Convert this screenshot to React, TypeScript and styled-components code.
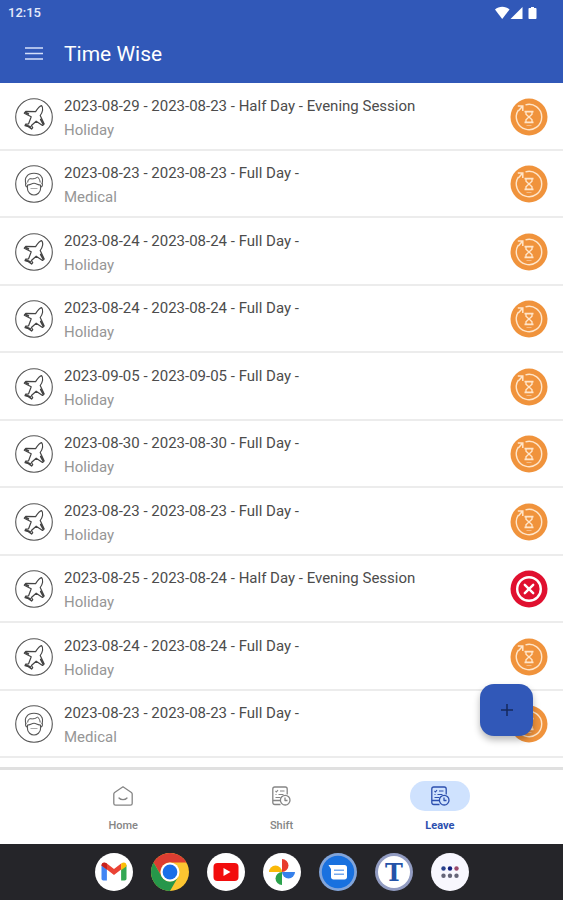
import React from "react";
import styled, { createGlobalStyle } from "styled-components";

const GlobalStyle = createGlobalStyle`
  * { box-sizing: border-box; }
  body { margin: 0; background: #fff; font-family: Roboto, "Liberation Sans", sans-serif; }
  button { font: inherit; color: inherit; border: 0; padding: 0; background: none; cursor: pointer; }
  ul { list-style: none; margin: 0; padding: 0; }
  svg { display: block; flex: none; }
`;

const Page = styled.div`
  min-height: 100vh;
  display: flex;
  flex-direction: column;
`;

const Header = styled.header`
  background: #3158b8;
  color: #fff;
`;

const StatusBar = styled.div`
  height: 25px;
  padding: 0 24px 0 8px;
  display: flex;
  align-items: center;
  justify-content: space-between;
  font-size: 13px;
  font-weight: 500;
  color: #e4eafa;
`;

const AppBar = styled.div`
  height: 58px;
  padding: 0 24px;
  display: flex;
  align-items: center;
  gap: 20px;
`;

const Title = styled.h1`
  margin: 0;
  font-size: 21px;
  line-height: 24px;
  font-weight: 400;
`;

const Main = styled.main`
  position: relative;
  flex: 1;
  display: flex;
  flex-direction: column;
  padding-bottom: 9px;
`;

const LeaveList = styled.ul`
  flex: 1;
  display: grid;
  grid-auto-rows: 1fr;
`;

const LeaveRow = styled.li`
  display: flex;
  align-items: center;
  gap: 11px;
  padding: 2px 15px 0;
  border-bottom: 2px solid #ececec;
`;

const Details = styled.div`
  flex: 1;
  min-width: 0;
  padding-top: 2px;
`;

const Period = styled.div`
  font-size: 15px;
  line-height: 24px;
  color: #4c4c4c;
`;

const Kind = styled.div`
  font-size: 15px;
  line-height: 24px;
  color: #969696;
`;

const AddButton = styled.button`
  position: absolute;
  right: 30px;
  bottom: 31px;
  width: 53px;
  height: 52px;
  border-radius: 14px;
  display: grid;
  place-items: center;
  && { background: #3158b8; }
  box-shadow: 0 4px 7px rgba(0, 0, 0, 0.28);
`;

const BottomNav = styled.nav`
  height: 77px;
  padding: 11px 44px 0;
  border-top: 3px solid #e0e0e0;
  display: flex;
  background: #fff;
`;

const Tab = styled.button<{ $active?: boolean }>`
  flex: 1;
  display: flex;
  flex-direction: column;
  align-items: center;
  gap: 7px;
  && {
    color: ${(p) => (p.$active ? "#2c4fae" : "#858585")};
    font-size: 11px;
    line-height: 16px;
    font-weight: ${(p) => (p.$active ? 700 : 500)};
  }
`;

const Pill = styled.span<{ $active?: boolean }>`
  width: 60px;
  height: 30px;
  border-radius: 15px;
  display: grid;
  place-items: center;
  background: ${(p) => (p.$active ? "#cfe2fe" : "transparent")};
`;

const Dock = styled.footer`
  height: 56px;
  display: flex;
  align-items: center;
  justify-content: center;
  gap: 18px;
  background: #252529;
`;

const DockApp = styled.button`
  width: 38px;
  height: 38px;
  border-radius: 50%;
`;

const PlaneIcon = () => (
  <svg width="38" height="38" viewBox="0 0 38 38" fill="none" stroke="#444" strokeLinejoin="round" aria-hidden="true">
    <circle cx="19" cy="19" r="18.3" stroke="#555" strokeWidth="1.1" />
    <path
      d="M26.600 7.600c-1.500.2-4.200 3.200-6 6L10.800 13.400l-1.500 1.800 6.900 3.600-2.600 7-3 .3-.6 1.600 3.400 1 3.200 2.400 1.200-1.400-1.400-2.200 4.800-4.300 6.300 4.300 1.600-1.700-3.900-8.300c2.400-3 3.500-7.700 1.400-9.900z"
      strokeWidth="1.200"
    />
    <path d="M25.800 21.500l2.600 4.800M10.500 14.500l2.800 1.400M11 27l4.500 2" strokeWidth="1.800" strokeLinecap="round" />
  </svg>
);

const MedicalIcon = () => (
  <svg width="38" height="38" viewBox="0 0 38 38" fill="none" stroke="#555" strokeLinejoin="round" aria-hidden="true">
    <circle cx="19" cy="19" r="18.3" strokeWidth="1.1" />
    <path d="M11 19c-.9-3-.7-6.200.8-7.600C13.500 9 16 8.300 19 8.300s5.600.7 7.200 3c1.500 1.700 1.600 4.800.7 7.700" strokeWidth="1.100" />
    <path d="M12.700 17.500c0-2 1-3.500 2.300-3.800 3 .5 5.600 0 7.600-1.700 1.300 1.300 2.500 3.200 2.600 5.500" />
    <path d="M11 18.300c-1 1.600-.2 3.700 1.600 4M27 18.300c1 1.600.2 3.700-1.600 4M12.500 20c2.300 0 4.300-1.700 6.500-1.700s4.200 1.700 6.500 1.700v4c0 3.300-3.400 6-6.500 6s-6.500-2.700-6.500-6z" strokeWidth="1.100" />
    <path d="M15.500 23.500h7" stroke="#aaa" />
  </svg>
);

const PendingIcon = () => (
  <svg width="38" height="38" viewBox="0 0 38 38" fill="none" stroke="#ffe5c9" role="img" aria-label="Pending">
    <circle cx="19" cy="19" r="18.500" fill="#f0933c" stroke="none" />
    <path d="M15.500 6.800A12.700 12.700 0 1 1 8.300 12.200" strokeWidth="1.400" />
    <path d="M7.800 8h5v5M12.500 8.300L8.300 13" strokeWidth="1.500" />
    <path d="M14.500 13.600h9M14.500 24.400h9" strokeWidth="1.700" />
    <path d="M16 14v2.200l6 5.600v2.200M22 14v2.200l-6 5.600v2.200" strokeWidth="1.400" />
    <path d="M16.500 27.500h5" stroke="#f6bd87" />
  </svg>
);

const RejectedIcon = () => (
  <svg width="38" height="38" viewBox="0 0 38 38" fill="none" stroke="#fff" role="img" aria-label="Rejected">
    <circle cx="19" cy="19" r="18.500" fill="#e0102f" stroke="none" />
    <circle cx="19" cy="19" r="11.800" strokeWidth="2.400" />
    <path d="M14.800 14.800l8.400 8.400m0-8.400l-8.400 8.400" strokeWidth="2.400" strokeLinecap="round" />
  </svg>
);

const HomeIcon = () => (
  <svg width="22" height="22" viewBox="0 0 22 22" fill="none" stroke="currentColor" strokeWidth="1.300" strokeLinejoin="round" aria-hidden="true">
    <path d="M11 1.800L2.600 7.500c-.5.400-.8.900-.8 1.500v9.500c0 1.100.7 1.700 1.800 1.700h14.800c1.100 0 1.800-.6 1.800-1.700V9c0-.6-.3-1.100-.8-1.500z" />
    <path d="M7 13c1.800 2.200 6.200 2.200 8 0" strokeLinecap="round" />
  </svg>
);

const ScheduleIcon = () => (
  <svg width="20" height="22" viewBox="0 0 20 22" fill="none" stroke="currentColor" strokeWidth="1.300" strokeLinejoin="round" aria-hidden="true">
    <path d="M9.500 19.500H3.800c-1.200 0-2-.7-2-2V4c0-1.200.8-2 2-2h10.400c1.200 0 2 .8 2 2v5.500M2 15.500h7" />
    <path d="M4.500 6l1 1 1.500-2M9 6h4.500M4.500 9.500h1M7.500 9.500h5M4.500 12.500h5" strokeWidth="1.100" />
    <circle cx="14.200" cy="15.200" r="4.800" />
    <path d="M14 12.500v3h2.500" />
  </svg>
);

const GmailIcon = () => (
  <svg width="38" height="38" viewBox="0 0 38 38" aria-hidden="true">
    <circle cx="19" cy="19" r="19" fill="#fff" />
    <path d="M6.500 12v13.500c0 1.200.7 2 1.900 2h3.500V16z" fill="#4285f4" />
    <path d="M26.100 16v11.500h3.500c1.200 0 1.900-.8 1.900-2V12z" fill="#34a853" />
    <path d="M6.500 13c0-3.300 3-4.200 5.400-2.400L19 16l7.100-5.400v6L19 22.100l-7.100-5.500-5.400-4z" fill="#ea4335" />
    <path d="M6.500 12.600c0-3 2.600-4 5.400-2v6l-5.400-4z" fill="#c5221f" />
    <path d="M26.100 10.600c2.800-2 5.400-1 5.400 2v.7l-5.400 4z" fill="#fbbc04" />
  </svg>
);

const ChromeIcon = () => (
  <svg width="38" height="38" viewBox="0 0 38 38" aria-hidden="true">
    <circle cx="19" cy="19" r="19" fill="#fcc531" />
    <path d="M2.550 9.500A19 19 0 0 1 35.450 9.500H19A9.500 9.500 0 0 0 10.770 23.750z" fill="#dc3d31" />
    <path d="M2.550 9.500A19 19 0 0 0 19 38L27.230 23.750A9.500 9.500 0 0 1 10.770 23.750z" fill="#26964a" />
    <circle cx="19" cy="19" r="9.500" fill="#fff" />
    <circle cx="19" cy="19" r="7.400" fill="#1a6fe8" />
  </svg>
);

const YouTubeIcon = () => (
  <svg width="38" height="38" viewBox="0 0 38 38" aria-hidden="true">
    <circle cx="19" cy="19" r="19" fill="#fff" />
    <rect x="6.500" y="10" width="25" height="18" rx="4" fill="#f20d0d" />
    <path d="M16.500 15v8l7-4z" fill="#fff" />
  </svg>
);

const PhotosIcon = () => (
  <svg width="38" height="38" viewBox="0 0 38 38" aria-hidden="true">
    <circle cx="19" cy="19" r="19" fill="#fff" />
    <path d="M19 6a6.500 6.500 0 0 1 0 13z" fill="#e83b2d" />
    <path d="M32 19a6.500 6.500 0 0 1-13 0z" fill="#3681ec" />
    <path d="M19 32a6.500 6.500 0 0 1 0-13z" fill="#2ba24c" />
    <path d="M6 19a6.500 6.500 0 0 1 13 0z" fill="#fab908" />
  </svg>
);

const MessagesIcon = () => (
  <svg width="38" height="38" viewBox="0 0 38 38" aria-hidden="true">
    <circle cx="19" cy="19" r="19" fill="#82a5da" />
    <circle cx="19" cy="19" r="16.200" fill="#1971df" />
    <path d="M9.500 12h16c1.500 0 2.500 1 2.500 2.500V24c0 1.400-1 2.500-2.500 2.500h-11c-1.500 0-2.500-1-2.500-2.500v-8z" fill="#fff" />
    <path d="M15 17.300h10M15 21.200h10" stroke="#75a9ef" strokeWidth="1.600" />
  </svg>
);

const LetterIcon = () => (
  <svg width="38" height="38" viewBox="0 0 38 38" aria-hidden="true">
    <circle cx="19" cy="19" r="19" fill="#929cc2" />
    <circle cx="19" cy="19" r="16" fill="#fff" />
    <text x="19" y="28" textAnchor="middle" fontFamily="DejaVu Serif, serif" fontSize="24" fontWeight="700" fill="#2453a8">T</text>
  </svg>
);

const AppsIcon = () => (
  <svg width="38" height="38" viewBox="0 0 38 38" aria-hidden="true">
    <circle cx="19" cy="19" r="19" fill="#f8f7fe" />
    <circle cx="12.500" cy="15.500" r="2.200" fill="#29418d" />
    <circle cx="19" cy="15.500" r="2.200" fill="#101f80" />
    <circle cx="25.500" cy="15.500" r="2.200" fill="#9b496b" />
    <circle cx="12.500" cy="22.800" r="2.200" fill="#656578" />
    <circle cx="19" cy="22.800" r="2.200" fill="#656578" />
    <circle cx="25.500" cy="22.800" r="2.200" fill="#656578" />
  </svg>
);

type Leave = { period: string; kind: "Holiday" | "Medical"; rejected?: boolean };

const leaves: Leave[] = [
  { period: "2023-08-29 - 2023-08-23 - Half Day - Evening Session", kind: "Holiday" },
  { period: "2023-08-23 - 2023-08-23 - Full Day -", kind: "Medical" },
  { period: "2023-08-24 - 2023-08-24 - Full Day -", kind: "Holiday" },
  { period: "2023-08-24 - 2023-08-24 - Full Day -", kind: "Holiday" },
  { period: "2023-09-05 - 2023-09-05 - Full Day -", kind: "Holiday" },
  { period: "2023-08-30 - 2023-08-30 - Full Day -", kind: "Holiday" },
  { period: "2023-08-23 - 2023-08-23 - Full Day -", kind: "Holiday" },
  { period: "2023-08-25 - 2023-08-24 - Half Day - Evening Session", kind: "Holiday", rejected: true },
  { period: "2023-08-24 - 2023-08-24 - Full Day -", kind: "Holiday" },
  { period: "2023-08-23 - 2023-08-23 - Full Day -", kind: "Medical" },
];

const dockApps = [
  { name: "Gmail", Icon: GmailIcon },
  { name: "Chrome", Icon: ChromeIcon },
  { name: "YouTube", Icon: YouTubeIcon },
  { name: "Photos", Icon: PhotosIcon },
  { name: "Messages", Icon: MessagesIcon },
  { name: "Time Wise", Icon: LetterIcon },
  { name: "All apps", Icon: AppsIcon },
];

export default function App() {
  return (
    <>
      <GlobalStyle />
      <Page>
        <Header>
          <StatusBar>
            <span>12:15</span>
            <svg width="44" height="14" viewBox="0 0 44 14" fill="#fff" aria-hidden="true">
              <path d="M0 3.500C4-.2 10.500-.2 14.500 3.500L7.200 13z" />
              <path d="M27.500 1v12H15.500z" />
              <path d="M34.500 2h1.500V1h3v1h1.500c.5 0 1 .4 1 1v9c0 .6-.5 1-1 1h-6c-.6 0-1-.4-1-1V3c0-.6.400-1 1-1z" />
            </svg>
          </StatusBar>
          <AppBar>
            <button aria-label="Open menu">
              <svg width="20" height="14" viewBox="0 0 20 14" stroke="#d5e0fa" strokeWidth="1.600" aria-hidden="true">
                <path d="M1 1h18M1 6.500h18M1 12h18" />
              </svg>
            </button>
            <Title>Time Wise</Title>
          </AppBar>
        </Header>
        <Main>
          <LeaveList>
            {leaves.map((leave, i) => (
              <LeaveRow key={i}>
                {leave.kind === "Holiday" ? <PlaneIcon /> : <MedicalIcon />}
                <Details>
                  <Period>{leave.period}</Period>
                  <Kind>{leave.kind}</Kind>
                </Details>
                {leave.rejected ? <RejectedIcon /> : <PendingIcon />}
              </LeaveRow>
            ))}
          </LeaveList>
          <AddButton aria-label="Add leave">
            <svg width="14" height="14" viewBox="0 0 14 14" stroke="#15285c" strokeWidth="1.500" aria-hidden="true">
              <path d="M7 1v12M1 7h12" />
            </svg>
          </AddButton>
        </Main>
        <BottomNav>
          <Tab>
            <Pill><HomeIcon /></Pill>
            Home
          </Tab>
          <Tab>
            <Pill><ScheduleIcon /></Pill>
            Shift
          </Tab>
          <Tab $active aria-current="page">
            <Pill $active><ScheduleIcon /></Pill>
            Leave
          </Tab>
        </BottomNav>
        <Dock>
          {dockApps.map(({ name, Icon }) => (
            <DockApp key={name} aria-label={name}>
              <Icon />
            </DockApp>
          ))}
        </Dock>
      </Page>
    </>
  );
}
